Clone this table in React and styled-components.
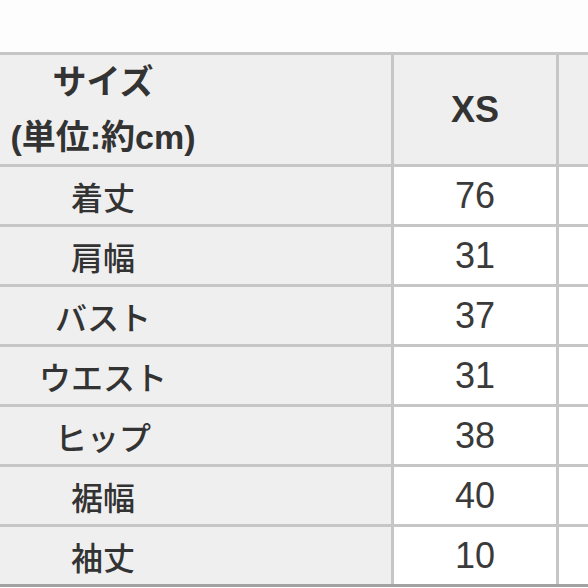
import React from "react";
import styled, { createGlobalStyle } from "styled-components";

const GlobalStyle = createGlobalStyle`
  html, body {
    margin: 0;
    padding: 0;
    background: #fdfdfd;
    overflow: hidden;
  }
`;

const Page = styled.div`
  width: 588px;
  height: 588px;
  overflow: hidden;
  padding-top: 52px;
  box-sizing: border-box;
  background: #fdfdfd;
`;

const Grid = styled.div`
  display: grid;
  grid-template-columns: 391px 162px 120px;
  grid-template-rows: 109px repeat(7, 57px);
  gap: 3px;
  padding-top: 3px;
  background: #c6c6c6;
  border-bottom: 3px solid #a2a2a2;
  width: 679px;
  color: #333333;
`;

const Cell = styled.div`
  display: flex;
  align-items: center;
  justify-content: center;
  background: ${(p) => (p.$shade ? "#efefef" : "#ffffff")};
`;

const LabelCell = styled(Cell)`
  padding-right: 185px;
  font-family: "Noto Sans CJK JP", sans-serif;
  font-size: 32px;
  font-weight: 500;
  background: #efefef;
`;

const HeadLabel = styled(LabelCell)`
  flex-direction: column;
  font-family: "Liberation Sans", "Noto Sans CJK JP", sans-serif;
  font-size: 34px;
  font-weight: 700;
  line-height: 55px;
`;

const SizeHead = styled(Cell)`
  font-family: "Liberation Sans", sans-serif;
  font-size: 36px;
  font-weight: 700;
  background: #efefef;
`;

const Value = styled(Cell)`
  font-family: "Liberation Sans", sans-serif;
  font-size: 36px;
  font-weight: 400;
  color: #3a3a3a;
`;

const rows = [
  ["着丈", "76"],
  ["肩幅", "31"],
  ["バスト", "37"],
  ["ウエスト", "31"],
  ["ヒップ", "38"],
  ["裾幅", "40"],
  ["袖丈", "10"],
];

export default function App() {
  return (
    <>
      <GlobalStyle />
      <Page>
        <Grid>
          <HeadLabel>
            <span>サイズ</span>
            <span>(単位:約cm)</span>
          </HeadLabel>
          <SizeHead>XS</SizeHead>
          <Cell $shade />
          {rows.map(([label, value]) => (
            <React.Fragment key={label}>
              <LabelCell>{label}</LabelCell>
              <Value>{value}</Value>
              <Cell />
            </React.Fragment>
          ))}
        </Grid>
      </Page>
    </>
  );
}
